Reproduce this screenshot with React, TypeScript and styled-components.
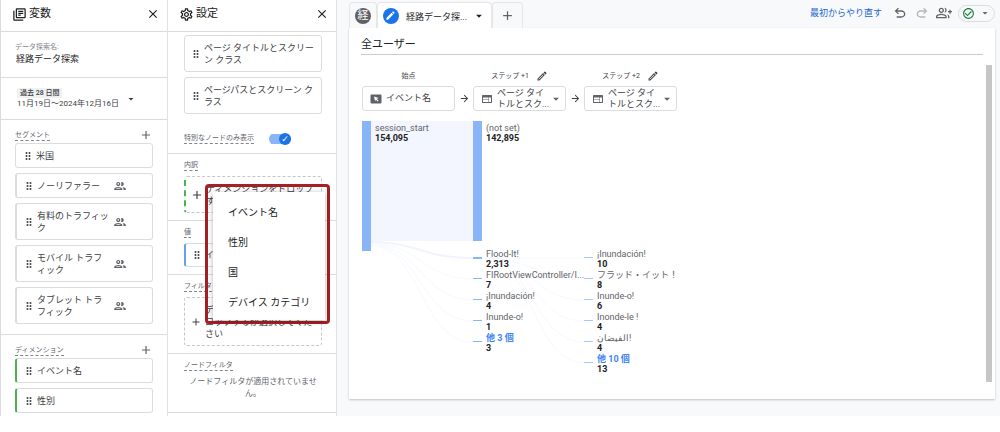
import React, { useState } from "react";
import styled, { createGlobalStyle } from "styled-components";
import {
  MdAdd,
  MdArrowDropDown,
  MdArrowForward,
  MdCheckCircleOutline,
  MdClose,
  MdDragIndicator,
  MdEdit,
  MdOutlineEdit,
  MdOutlineGroup,
  MdOutlineGroupAdd,
  MdOutlineLibraryBooks,
  MdOutlineSettings,
  MdWeb,
} from "react-icons/md";

const GlobalStyle = createGlobalStyle`
  * { box-sizing: border-box; }
  body {
    margin: 0;
    background: #fff;
    color: #3c4043;
    font-family: Roboto, "Noto Sans CJK JP", sans-serif;
    font-size: 9px;
    line-height: 12px;
  }
  button, input { font: inherit; color: inherit; margin: 0; padding: 0; border: 0; background: none; }
  h1, h2, h3, p, ul { margin: 0; padding: 0; font: inherit; }
  ul { list-style: none; }
  svg { display: block; flex: none; }
`;

const Page = styled.div`
  display: grid;
  grid-template-columns: 168px 169px minmax(0, 1fr);
`;

const Panel = styled.aside`
  border-right: 1px solid #e0e2e4;
  &:first-child { border-left: 1px solid #dadce0; }
`;

const PanelHeader = styled.header`
  display: flex;
  align-items: center;
  gap: 2px;
  height: 32px;
  padding: 0 7px 3px 11px;
  border-bottom: 1px solid #dadce0;
  color: #202124;
`;

const PanelTitle = styled.h2`
  flex: 1;
  font-size: 11px;
  line-height: 16px;
`;

const IconButton = styled.button`
  display: flex;
  align-items: center;
  justify-content: center;
  color: #5f6368;
`;

const Section = styled.section<{ $height?: number }>`
  position: relative;
  padding: 7px 14px 8px;
  min-height: ${(p) => p.$height ?? 0}px;
  border-bottom: 1px solid #dadce0;
  &:last-child { padding-bottom: 3px; border-bottom: 0; }
`;

const NameSection = styled(Section)`
  padding-top: 9px;
`;

const SettingsSection = styled(Section)`
  padding: 6px 14px 7px 16px;
  &:last-child { border-bottom: 1px solid #dadce0; }
`;

const PageSection = styled(SettingsSection)`
  padding-top: 3px;
  padding-bottom: 0;
`;

const NameLabel = styled.label`
  display: block;
  color: #80868b;
  font-size: 7px;
  line-height: 12px;
`;

const NameInput = styled.input`
  display: block;
  width: 100%;
  height: 12px;
  padding: 0 0 0 1px;
  color: #202124;
`;

const DateButton = styled.button`
  display: flex;
  align-items: center;
  gap: 6px;
  margin: 3px 0 0 2px;
  text-align: left;
  font-size: 8px;
  line-height: 11px;
  white-space: nowrap;
`;

const DatePreset = styled.span`
  display: block;
  width: max-content;
  padding: 0 3px;
  background: #eff0f1;
  font-size: 7px;
  line-height: 10px;
  font-weight: 500;
`;

const SectionHead = styled.div`
  display: flex;
  justify-content: space-between;
  align-items: center;
  height: 16px;
`;

const SettingsHead = styled(SectionHead)`
  align-items: flex-start;
`;

const SectionLabel = styled.h3`
  border-bottom: 1px dashed #80868b;
  color: #5f6368;
  font-size: 7px;
  line-height: 10px;
`;

const CardList = styled.ul`
  display: grid;
  gap: 5px;
`;

const Card = styled.li<{ $accent?: string; $lines?: number }>`
  display: flex;
  align-items: center;
  gap: 2px;
  height: ${(p) => (p.$lines === 2 ? 37 : 25)}px;
  padding-left: 6px;
  border: 1px solid #dadce0;
  border-left: ${(p) => (p.$accent ? `2px solid ${p.$accent}` : "1px solid #dadce0")};
  border-radius: 3px;
  background: #fff;
  white-space: nowrap;
`;

const SettingsCard = styled(Card)`
  height: ${(p) => (p.$lines === 2 ? 37 : 24)}px;
  padding-left: 5px;
`;

const Grow = styled.span`
  flex: 1;
`;

const AudienceIcon = styled(MdOutlineGroup)`
  margin-right: 25px;
  color: #5f6368;
`;

const ToggleRow = styled.label`
  display: flex;
  align-items: center;
  gap: 15px;
  height: 39px;
  padding-top: 10px;
  cursor: pointer;
`;

const ToggleText = styled.span`
  border-bottom: 1px dashed #80868b;
  color: #5f6368;
  font-size: 7px;
  line-height: 10px;
`;

const Toggle = styled.input`
  appearance: none;
  display: grid;
  align-items: center;
  width: 22px;
  height: 12px;
  background: linear-gradient(#8ab4f8, #8ab4f8) center / 22px 10px no-repeat;
  border-radius: 6px;
  &::after {
    content: "✓";
    width: 12px;
    height: 12px;
    border-radius: 50%;
    background: #1a73e8;
    color: #fff;
    font: 700 9px/12px "DejaVu Sans", sans-serif;
    text-align: center;
  }
  &:checked::after { justify-self: end; }
`;

const DropZone = styled.button<{ $lines: number }>`
  display: flex;
  align-items: center;
  gap: 3px;
  width: 100%;
  height: ${(p) => p.$lines * 12 + 13}px;
  padding-left: 5px;
  border: 1px dashed #c4c7c9;
  border-radius: 3px;
  text-align: left;
  white-space: nowrap;
`;

const GreenDropZone = styled(DropZone)`
  gap: 2px;
  padding-left: 4px;
  border-left: 2px dashed #4caf50;
`;

const Highlight = styled.div`
  position: absolute;
  z-index: 2;
  top: 30px;
  left: 37px;
  width: 125px;
  padding: 5px 2px 1px 5px;
  border: 3px solid #a52025;
  border-radius: 4px;
`;

const Menu = styled.div`
  display: grid;
  padding: 6px 0 2px;
  background: #fff;
  box-shadow: 0 1px 5px rgba(0, 0, 0, 0.3);
`;

const MenuItem = styled.button`
  height: 30px;
  padding-left: 15px;
  color: #202124;
  font-size: 10px;
  text-align: left;
`;

const EmptyNote = styled.p`
  color: #5f6368;
  font-size: 8px;
  text-align: center;
  white-space: nowrap;
`;

const Main = styled.main`
  padding: 2px 5px 16px 12px;
  background: #f8f9fa;
`;

const TopBar = styled.div`
  display: flex;
  align-items: stretch;
  justify-content: space-between;
  height: 26px;
`;

const Tabs = styled.div`
  display: flex;
`;

const Tab = styled.button<{ $active?: boolean; $width: number }>`
  display: flex;
  align-items: center;
  justify-content: center;
  width: ${(p) => p.$width}px;
  border: 1px solid #e4e6e8;
  border-width: 1px 1px 0 1px;
  border-radius: 4px 4px 0 0;
  background: ${(p) => (p.$active ? "#fff" : "#f8f9fa")};
  color: #202124;
  white-space: nowrap;
`;

const Badge = styled.span<{ $color: string }>`
  display: flex;
  align-items: center;
  justify-content: center;
  width: 16px;
  height: 16px;
  border-radius: 50%;
  background: ${(p) => p.$color};
  color: #fff;
  font-size: 11px;
`;

const TabName = styled.span`
  margin: 3px 5px 0 7px;
`;

const Actions = styled.div`
  display: flex;
  align-items: center;
  gap: 6px;
  padding-bottom: 4px;
`;

const RestartLink = styled.a`
  margin-right: 4px;
  color: #1967d2;
  text-decoration: none;
`;

const StatusButton = styled(IconButton)`
  gap: 4px;
  width: 37px;
  height: 17px;
  border: 1px solid #dadce0;
  border-radius: 9px;
`;

const Canvas = styled.div`
  padding: 8px 3px 17px 12px;
  background: #fff;
  box-shadow: 0 1px 2px rgba(60, 64, 67, 0.3);
`;

const CanvasTitle = styled.h1`
  margin-right: 9px;
  border-bottom: 1px solid #c8cacc;
  color: #202124;
  font-size: 11px;
  line-height: 18px;
`;

const Scroller = styled.div`
  display: flex;
  justify-content: space-between;
  margin-top: 10px;
  padding-left: 1px;
`;

const ScrollThumb = styled.div`
  width: 6px;
  background: #c6c6c6;
`;

const Flow = styled.div`
  min-width: 0;
`;

const Steps = styled.div`
  display: grid;
  grid-template-columns: 93px 18px 93px 18px 93px;
  align-items: center;
  justify-items: center;
`;

const StepName = styled.div<{ $column: number }>`
  grid-column: ${(p) => p.$column};
  display: flex;
  align-items: center;
  gap: 7px;
  height: 21px;
  font-size: 7px;
`;

const StepBox = styled.button`
  display: flex;
  align-items: center;
  width: 93px;
  height: 25px;
  padding: 0 3px 0 7px;
  border: 1px solid #dadce0;
  border-radius: 3px;
  text-align: left;
  line-height: 11px;
  white-space: nowrap;
`;

const StepText = styled.span`
  flex: 1;
  margin-left: 4px;
`;

const Chart = styled.svg`
  margin-top: 9px;
  font-size: 9px;
`;

const UndoIcon = ({ flip }: { flip?: boolean }) => (
  <svg width="16" height="16" viewBox="0 -960 960 960" fill={flip ? "#b4b7ba" : "#5f6368"}>
    <path
      transform={flip ? "translate(960 0) scale(-1 1)" : undefined}
      d="M280-200v-80h284q63 0 109.5-40T720-420q0-60-46.5-100T564-560H312l104 104-56 56-200-200 200-200 56 56-104 104h252q97 0 169.5 63T800-420q0 94-72.5 157T564-200H280Z"
    />
  </svg>
);

const EventIcon = () => (
  <svg width="12" height="10" viewBox="0 0 12 10">
    <rect x="0.5" y="0.5" width="11" height="9" rx="1" fill="#5f6368" />
    <path d="M4 2.5l4.5 1.6-1.7 0.8 1.8 1.9-0.8 0.8-1.9-1.9-0.8 1.5z" fill="#fff" />
  </svg>
);

const Grip = () => <MdDragIndicator size={12} color="#4a4e52" />;

const Lines = ({ text }: { text: string[] }) => (
  <span>
    {text.map((line, i) => (
      <React.Fragment key={line}>
        {i > 0 && <br />}
        {line}
      </React.Fragment>
    ))}
  </span>
);

const segments = [
  { text: ["米国"], shared: false },
  { text: ["ノーリファラー"], shared: true },
  { text: ["有料のトラフィッ", "ク"], shared: true },
  { text: ["モバイル トラフ", "ィック"], shared: true },
  { text: ["タブレット トラ", "フィック"], shared: true },
];

const pages = [
  ["ページ タイトルとスクリー", "ン クラス"],
  ["ページパスとスクリーン ク", "ラス"],
];

type ChartNode = { label: string; value: string; more?: boolean };

const stepOne: ChartNode[] = [
  { label: "Flood-It!", value: "2,313" },
  { label: "FIRootViewController/I...", value: "7" },
  { label: "¡Inundación!", value: "4" },
  { label: "Inunde-o!", value: "1" },
  { label: "他 3 個", value: "3", more: true },
];

const stepTwo: ChartNode[] = [
  { label: "¡Inundación!", value: "10" },
  { label: "フラッド・イット！", value: "8" },
  { label: "Inunde-o!", value: "6" },
  { label: "Inonde-le !", value: "4" },
  { label: "الفيضان!", value: "4" },
  { label: "他 10 個", value: "13", more: true },
];

const ROW = 21;
const FIRST = 138;

const NodeText = ({ x, y, node }: { x: number; y: number; node: ChartNode }) => (
  <>
    <text x={x} y={y} fill={node.more ? "#4285f4" : "#5f6368"} fontWeight={node.more ? 700 : 400}>
      {node.label}
    </text>
    <text x={x} y={y + 10} fill="#202124" fontWeight={700}>
      {node.value}
    </text>
  </>
);

const PathChart = () => (
  <Chart width="330" height="262" viewBox="1 0 330 262" role="img" aria-label="経路データ">
    <rect x="10" y="1" width="102" height="120" fill="#f3f6fe" />
    {stepOne.map((n, i) => (
      <path
        key={n.label}
        d={`M10 ${122 + i} C60 ${123 + i} 60 ${FIRST + i * ROW} 112 ${FIRST + i * ROW}`}
        fill="none"
        stroke={i ? "#f7f9fe" : "#f1f4fd"}
        strokeWidth={i ? 1 : 2}
      />
    ))}
    {stepTwo.map((n, i) => (
      <path
        key={n.label}
        d={`M121 ${FIRST} C172 ${FIRST} 172 ${FIRST + i * ROW} 223 ${FIRST + i * ROW}`}
        fill="none"
        stroke="#f7f9fe"
      />
    ))}
    <rect x="1" y="1" width="9" height="130" fill="#8ab4f8" />
    <rect x="112" y="1" width="9" height="120" fill="#8ab4f8" />
    <NodeText x={14} y={11} node={{ label: "session_start", value: "154,095" }} />
    <NodeText x={125} y={11} node={{ label: "(not set)", value: "142,895" }} />
    {stepOne.map((n, i) => (
      <g key={n.label}>
        <rect x="112" y={FIRST - 1 + i * ROW} width="9" height={i ? 1 : 2} fill="#8ab4f8" />
        <NodeText x={125} y={FIRST - 1 + i * ROW} node={n} />
      </g>
    ))}
    {stepTwo.map((n, i) => (
      <g key={n.label}>
        <rect x="223" y={FIRST - 1 + i * ROW} width="9" height="1" fill="#a8c7fa" />
        <NodeText x={236} y={FIRST - 1 + i * ROW} node={n} />
      </g>
    ))}
  </Chart>
);

const PageStep = () => (
  <StepBox aria-haspopup="listbox">
    <MdWeb size={12} color="#5f6368" />
    <StepText>
      <Lines text={["ページ タイ", "トルとスク..."]} />
    </StepText>
    <MdArrowDropDown size={14} color="#5f6368" />
  </StepBox>
);

export default function App() {
  const [onlyUnique, setOnlyUnique] = useState(true);

  return (
    <>
      <GlobalStyle />
      <Page>
        <Panel>
          <PanelHeader>
            <MdOutlineLibraryBooks size={15} />
            <PanelTitle>変数</PanelTitle>
            <IconButton aria-label="閉じる">
              <MdClose size={14} color="#202124" />
            </IconButton>
          </PanelHeader>
          <NameSection $height={46}>
            <NameLabel htmlFor="name">データ探索名:</NameLabel>
            <NameInput id="name" defaultValue="経路データ探索" />
          </NameSection>
          <Section $height={42}>
            <DateButton>
              <span>
                <DatePreset>過去 28 日間</DatePreset>
                11月19日～2024年12月16日
              </span>
              <MdArrowDropDown size={12} />
            </DateButton>
          </Section>
          <Section $height={215}>
            <SectionHead>
              <SectionLabel>セグメント</SectionLabel>
              <IconButton aria-label="セグメントを追加">
                <MdAdd size={14} />
              </IconButton>
            </SectionHead>
            <CardList>
              {segments.map((s) => (
                <Card key={s.text[0]} $lines={s.text.length} $accent={s.shared ? "#dadce0" : undefined}>
                  <Grip />
                  <Grow>
                    <Lines text={s.text} />
                  </Grow>
                  {s.shared && <AudienceIcon size={14} />}
                </Card>
              ))}
            </CardList>
          </Section>
          <Section>
            <SectionHead>
              <SectionLabel>ディメンション</SectionLabel>
              <IconButton aria-label="ディメンションを追加">
                <MdAdd size={14} />
              </IconButton>
            </SectionHead>
            <CardList>
              {["イベント名", "性別"].map((d) => (
                <Card key={d} $accent="#4caf50">
                  <Grip />
                  {d}
                </Card>
              ))}
            </CardList>
          </Section>
        </Panel>

        <Panel>
          <PanelHeader>
            <MdOutlineSettings size={15} />
            <PanelTitle>設定</PanelTitle>
            <IconButton aria-label="閉じる">
              <MdClose size={14} color="#202124" />
            </IconButton>
          </PanelHeader>
          <PageSection>
            <CardList>
              {pages.map((p) => (
                <SettingsCard key={p[0]} $lines={2}>
                  <Grip />
                  <Lines text={p} />
                </SettingsCard>
              ))}
            </CardList>
            <ToggleRow>
              <ToggleText>特別なノードのみ表示</ToggleText>
              <Toggle
                type="checkbox"
                checked={onlyUnique}
                onChange={(e) => setOnlyUnique(e.target.checked)}
              />
            </ToggleRow>
          </PageSection>
          <SettingsSection>
            <SettingsHead>
              <SectionLabel>内訳</SectionLabel>
            </SettingsHead>
            <GreenDropZone $lines={2}>
              <MdAdd size={14} />
              <Lines text={["ディメンションをドロップ", "するか選択してください"]} />
            </GreenDropZone>
            <Highlight>
              <Menu role="menu">
                {["イベント名", "性別", "国", "デバイス カテゴリ"].map((m) => (
                  <MenuItem key={m} role="menuitem">
                    {m}
                  </MenuItem>
                ))}
              </Menu>
            </Highlight>
          </SettingsSection>
          <SettingsSection>
            <SettingsHead>
              <SectionLabel>値</SectionLabel>
            </SettingsHead>
            <CardList>
              <SettingsCard $accent="#669df6">
                <Grip />
                イベント数
              </SettingsCard>
            </CardList>
          </SettingsSection>
          <SettingsSection>
            <SettingsHead>
              <SectionLabel>フィルタ</SectionLabel>
            </SettingsHead>
            <DropZone $lines={3}>
              <MdAdd size={12} />
              <Lines text={["ディメンションや指標をド", "ロップするか選択してくだ", "さい"]} />
            </DropZone>
          </SettingsSection>
          <SettingsSection $height={59}>
            <SettingsHead>
              <SectionLabel>ノードフィルタ</SectionLabel>
            </SettingsHead>
            <EmptyNote>
              <Lines text={["ノードフィルタが適用されていませ", "ん。"]} />
            </EmptyNote>
          </SettingsSection>
        </Panel>

        <Main>
          <TopBar>
            <Tabs>
              <Tab $width={28}>
                <Badge $color="#5f6368">経</Badge>
              </Tab>
              <Tab $active $width={115}>
                <Badge $color="#1a73e8">
                  <MdEdit size={11} />
                </Badge>
                <TabName>経路データ探...</TabName>
                <MdArrowDropDown size={14} />
              </Tab>
              <Tab $width={31} aria-label="タブを追加">
                <MdAdd size={15} color="#5f6368" />
              </Tab>
            </Tabs>
            <Actions>
              <RestartLink href="#restart">最初からやり直す</RestartLink>
              <IconButton aria-label="元に戻す">
                <UndoIcon />
              </IconButton>
              <IconButton aria-label="やり直す">
                <UndoIcon flip />
              </IconButton>
              <IconButton aria-label="共有">
                <MdOutlineGroupAdd size={16} />
              </IconButton>
              <StatusButton aria-label="ステータス">
                <MdCheckCircleOutline size={13} color="#188038" />
                <MdArrowDropDown size={12} />
              </StatusButton>
            </Actions>
          </TopBar>
          <Canvas>
            <CanvasTitle>全ユーザー</CanvasTitle>
            <Scroller>
              <Flow>
                <Steps>
                  <StepName $column={1}>始点</StepName>
                  <StepName $column={3}>
                    ステップ +1 <MdOutlineEdit size={12} />
                  </StepName>
                  <StepName $column={5}>
                    ステップ +2 <MdOutlineEdit size={12} />
                  </StepName>
                  <StepBox>
                    <EventIcon />
                    <StepText>イベント名</StepText>
                  </StepBox>
                  <MdArrowForward size={11} />
                  <PageStep />
                  <MdArrowForward size={11} />
                  <PageStep />
                </Steps>
                <PathChart />
              </Flow>
              <ScrollThumb />
            </Scroller>
          </Canvas>
        </Main>
      </Page>
    </>
  );
}
